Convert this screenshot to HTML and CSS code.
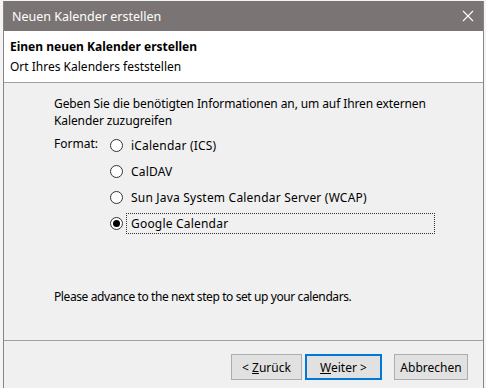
FILE: index.html
```html
<!DOCTYPE html>
<html lang="de">
<head>
    <meta charset="UTF-8">
    <title>Neuen Kalender erstellen</title>
    <link rel="stylesheet" href="styles.css">
</head>
<body>
    <div class="window">
        <div class="titlebar">
            <span class="title">Neuen Kalender erstellen</span>
            <svg class="close" width="12" height="12" viewBox="0 0 12 12">
                <path d="M1 1 L11 11 M11 1 L1 11" stroke="#fff" stroke-width="1.1" fill="none"/>
            </svg>
        </div>
        <div class="header">
            <div class="header-title">Einen neuen Kalender erstellen</div>
            <div class="header-sub">Ort Ihres Kalenders feststellen</div>
        </div>
        <div class="content">
            <p class="intro">Geben Sie die benötigten Informationen an, um auf Ihren externen<br>Kalender zuzugreifen</p>
            <div class="format">
                <div class="format-label">Format:</div>
                <div class="options">
                    <label class="option"><span class="radio"></span>iCalendar (ICS)</label>
                    <label class="option"><span class="radio"></span>CalDAV</label>
                    <label class="option"><span class="radio"></span>Sun Java System Calendar Server (WCAP)</label>
                    <label class="option"><span class="radio checked"></span><span class="focus">Google Calendar</span></label>
                </div>
            </div>
            <p class="advance">Please advance to the next step to set up your calendars.</p>
        </div>
        <div class="footer">
            <button class="btn">&lt; <u>Z</u>urück</button>
            <button class="btn default"><u>W</u>eiter &gt;</button>
            <button class="btn cancel">Abbrechen</button>
        </div>
    </div>
</body>
</html>
```

FILE: styles.css
```css
body {
    margin: 0;
    padding: 1px 2px 0 3px;
    background-color: #f4f4f4;
    font-family: "Noto Sans", sans-serif;
    font-size: 12px;
    color: #000;
}

.window {
    width: 479px;
    height: 387px;
    border-left: 1px solid #8a8584;
    border-right: 1px solid #8a8584;
    display: flex;
    flex-direction: column;
    background-color: #f0f0f0;
}

.titlebar {
    height: 30px;
    background-color: #7a7574;
    color: #fff;
    display: flex;
    align-items: center;
    justify-content: space-between;
    padding: 0 9px 0 8px;
    flex-shrink: 0;
}

.title {
    font-size: 12.5px;
}

.header {
    background-color: #fff;
    border-bottom: 1px solid #a0a0a0;
    padding: 7px 0 0 6px;
    box-sizing: border-box;
    height: 52px;
    flex-shrink: 0;
}

.header-title {
    font-weight: bold;
    line-height: 18px;
}

.header-sub {
    line-height: 18px;
    margin-top: 2px;
}

.content {
    flex-shrink: 0;
    padding: 12px 0 0 50px;
    box-sizing: border-box;
    border-bottom: 1px solid #a0a0a0;
    height: 258px;
}

.intro {
    margin: 0;
    line-height: 17px;
    letter-spacing: -0.1px;
}

.format {
    display: flex;
    margin-top: 6px;
}

.format-label {
    width: 56px;
    line-height: 18px;
}

.options {
    display: flex;
    flex-direction: column;
    gap: 8px;
    margin-top: 1px;
}

.option {
    display: flex;
    align-items: center;
    height: 18px;
    letter-spacing: 0.2px;
}

.radio {
    width: 11px;
    height: 11px;
    border: 1px solid #333;
    border-radius: 50%;
    background-color: #fff;
    margin-right: 8px;
    position: relative;
}

.radio.checked::after {
    content: "";
    position: absolute;
    left: 2px;
    top: 2px;
    width: 7px;
    height: 7px;
    border-radius: 50%;
    background-color: #000;
}

.focus {
    border: 1px dotted #333;
    margin-left: -5px;
    padding: 1px 4px;
    width: 299px;
}

.advance {
    margin: 56px 0 0;
    line-height: 17px;
    letter-spacing: -0.4px;
}

.footer {
    display: flex;
    justify-content: flex-end;
    padding: 13px 15px 0 0;
}

.btn {
    font-family: "Noto Sans", sans-serif;
    font-size: 12px;
    background-color: #e1e1e1;
    border: 1px solid #adadad;
    height: 26px;
    width: 71px;
    margin-left: 3px;
    padding: 0;
    color: #000;
}

.btn.default {
    border: 2px solid #0078d7;
    width: 77px;
}

.btn.cancel {
    margin-left: 12px;
    width: 74px;
}
```
